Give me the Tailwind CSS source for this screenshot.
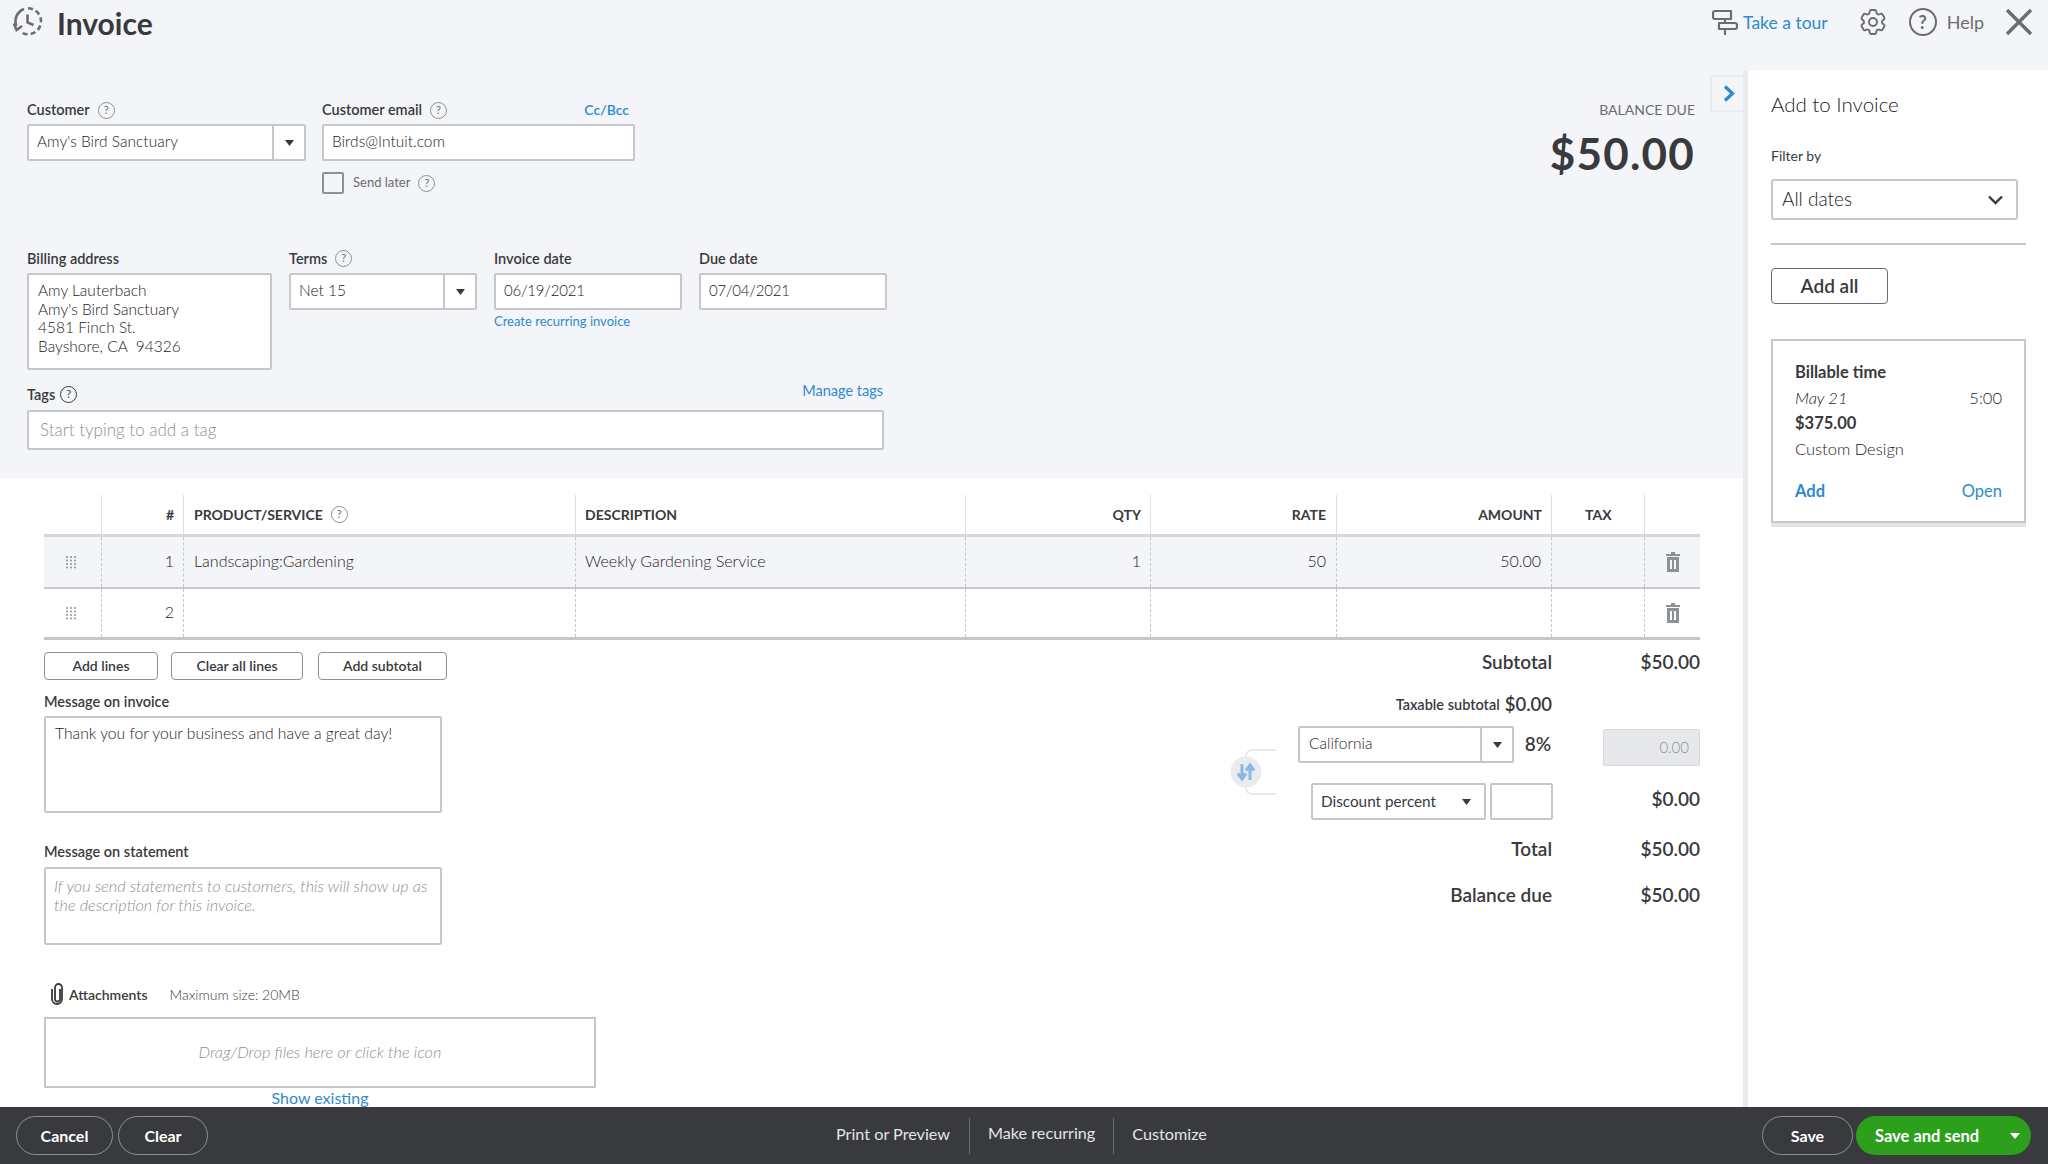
<!DOCTYPE html>
<html lang="en">
<head>
  <meta charset="UTF-8" />
  <title>Invoice</title>
  <script src="https://cdn.jsdelivr.net/npm/@tailwindcss/browser@4"></script>
</head>
<body class="w-[2048px] h-[1164px] overflow-hidden flex flex-col bg-white text-[#393a3d] font-['Lato','Open_Sans',sans-serif]">

  <!-- Header -->
  <header class="h-[70px] shrink-0 bg-[#f4f5f8] flex items-start">
    <svg class="w-[30px] h-[29px] ml-[13px] mt-[7px] text-[#6b6c72]" viewBox="0 0 30 29" fill="none" stroke="currentColor" stroke-width="2.6">
      <path d="M11 2A13 13 0 0 0 3.4 19" />
      <path d="M15 1.3A13 13 0 0 1 28 14.3A13 13 0 0 1 15 27.3A13 13 0 0 1 9.5 26" stroke-dasharray="5 3.2" />
      <path d="M0.8 16.5L3.6 23L9 19" />
      <path d="M14.5 7.5V15.5L20.5 18" />
    </svg>
    <h1 class="ml-[14px] mt-[4px] text-[30px] leading-[38px] font-bold">Invoice</h1>
    <div class="ml-auto flex items-start">
      <svg class="w-[26px] h-[28px] mt-[9px] text-[#6b6c72]" viewBox="0 0 26 28" fill="none" stroke="currentColor" stroke-width="2.2" stroke-linejoin="round">
        <path d="M3 2h16v8H3a2 2 0 0 1-2-2V4a2 2 0 0 1 2-2Z" />
        <path d="M7 14h16a2 2 0 0 1 2 2v2a2 2 0 0 1-2 2H7Z" />
        <path d="M13 10v4M13 20v6" />
      </svg>
      <a class="ml-[5px] mt-[10px] text-[17.5px] leading-[26px] text-[#2e8ace]">Take a tour</a>
      <svg class="w-[32px] h-[32px] ml-[29px] mt-[6px] text-[#6b6c72]" viewBox="0 0 24 24" fill="none" stroke="currentColor" stroke-width="1.4">
        <path d="M9.594 3.94c.09-.542.56-.94 1.11-.94h2.593c.55 0 1.02.398 1.11.94l.213 1.281c.063.374.313.686.645.87.074.04.147.083.22.127.325.196.72.257 1.075.124l1.217-.456a1.125 1.125 0 0 1 1.37.49l1.296 2.247a1.125 1.125 0 0 1-.26 1.431l-1.003.827c-.293.241-.438.613-.43.992a7.723 7.723 0 0 1 0 .255c-.008.378.137.75.43.991l1.004.827c.424.35.534.955.26 1.43l-1.298 2.247a1.125 1.125 0 0 1-1.369.491l-1.217-.456c-.355-.133-.75-.072-1.076.124a6.47 6.47 0 0 1-.22.128c-.331.183-.581.495-.644.869l-.213 1.281c-.09.543-.56.94-1.11.94h-2.594c-.55 0-1.019-.398-1.11-.94l-.213-1.281c-.062-.374-.312-.686-.644-.87a6.52 6.52 0 0 1-.22-.127c-.325-.196-.72-.257-1.076-.124l-1.217.456a1.125 1.125 0 0 1-1.369-.49l-1.297-2.247a1.125 1.125 0 0 1 .26-1.431l1.004-.827c.292-.24.437-.613.43-.991a6.932 6.932 0 0 1 0-.255c.007-.38-.138-.751-.43-.992l-1.004-.827a1.125 1.125 0 0 1-.26-1.43l1.297-2.247a1.125 1.125 0 0 1 1.37-.491l1.216.456c.356.133.751.072 1.076-.124.072-.044.146-.086.22-.128.332-.183.582-.495.644-.869l.214-1.28Z" />
        <circle cx="12" cy="12" r="3" />
      </svg>
      <span class="ml-[20px] mt-[8px] w-[28px] h-[28px] rounded-full border-[2px] border-[#6b6c72] flex items-center justify-center text-[18px] font-bold text-[#6b6c72]">?</span>
      <span class="ml-[10px] mt-[9px] text-[18px] leading-[26px] text-[#6b6c72]">Help</span>
      <svg class="w-[28px] h-[28px] ml-[21px] mr-[15px] mt-[8px] text-[#6b6c72]" viewBox="0 0 28 28" fill="none" stroke="currentColor" stroke-width="3.4">
        <path d="M2 2L26 26M26 2L2 26" />
      </svg>
    </div>
  </header>

  <div class="flex-1 flex min-h-0">

    <!-- Main column -->
    <main class="w-[1743px] shrink-0 flex flex-col overflow-hidden">

      <!-- Top form -->
      <section class="h-[408px] shrink-0 bg-[#f4f5f8] relative pl-[27px] pr-[48px] pt-[30px]">
        <div class="absolute right-[-2px] top-[5px] w-[35px] h-[37px] border-2 border-r-0 border-[#e9ebef] flex items-center justify-center">
          <svg class="w-[12px] h-[17px] text-[#2e8ace]" viewBox="0 0 12 17" fill="none" stroke="currentColor" stroke-width="3.2"><path d="M2 1.5L9.5 8.5L2 15.5" /></svg>
        </div>

        <div class="flex h-[149px]">
          <div class="w-[279px]">
            <div class="h-[24px] flex items-start gap-[8px]">
              <span class="text-[14.5px] leading-[20px] font-semibold">Customer</span>
              <span class="mt-[2px] w-[17px] h-[17px] rounded-full border-[1.5px] border-[#8d9096] flex items-center justify-center text-[11px] text-[#6b6c72]">?</span>
            </div>
            <div class="h-[37px] bg-white border-2 border-[#c4c7cc] rounded-[2px] flex items-center">
              <span class="flex-1 pl-[8px] pb-[1px] text-[15.5px] font-light text-[#1f2023]">Amy's Bird Sanctuary</span>
              <span class="w-[32px] h-full border-l-2 border-[#c4c7cc] flex items-center justify-center">
                <svg class="w-[9px] h-[6px]" viewBox="0 0 9 6" fill="#393a3d"><path d="M0 0H9L4.5 6Z" /></svg>
              </span>
            </div>
          </div>
          <div class="w-[313px] ml-[16px]">
            <div class="h-[24px] flex items-start gap-[8px]">
              <span class="text-[14.5px] leading-[20px] font-semibold">Customer email</span>
              <span class="mt-[2px] w-[17px] h-[17px] rounded-full border-[1.5px] border-[#8d9096] flex items-center justify-center text-[11px] text-[#6b6c72]">?</span>
              <a class="ml-auto mr-[6px] text-[14px] leading-[20px] font-semibold text-[#2e8ace]">Cc/Bcc</a>
            </div>
            <div class="h-[37px] bg-white border-2 border-[#c4c7cc] rounded-[2px] flex items-center pl-[8px] pb-[1px] text-[15.5px] font-light text-[#1f2023]">Birds@Intuit.com</div>
            <div class="mt-[11px] flex items-center">
              <span class="w-[22px] h-[22px] border-2 border-[#8d9096] rounded-[2px]"></span>
              <span class="ml-[9px] text-[13px] text-[#6b6c72]">Send later</span>
              <span class="ml-[8px] w-[17px] h-[17px] rounded-full border-[1.5px] border-[#8d9096] flex items-center justify-center text-[11px] text-[#6b6c72]">?</span>
            </div>
          </div>
          <div class="ml-auto text-right">
            <div class="text-[14px] leading-[20px] text-[#6b6c72]">BALANCE DUE</div>
            <div class="mt-[8px] text-[44px] leading-[50px] font-bold tracking-[1.2px]">$50.00</div>
          </div>
        </div>

        <div class="flex gap-[17px]">
          <div class="w-[245px]">
            <div class="h-[24px] text-[14.5px] leading-[20px] font-semibold">Billing address</div>
            <div class="h-[97px] bg-white border-2 border-[#c4c7cc] rounded-[2px] pl-[9px] pt-[6px] text-[15.5px] font-light text-[#1f2023] leading-[18.5px]">
              <div>Amy Lauterbach</div>
              <div>Amy's Bird Sanctuary</div>
              <div>4581 Finch St.</div>
              <div>Bayshore, CA&nbsp; 94326</div>
            </div>
          </div>
          <div class="w-[188px]">
            <div class="h-[24px] flex items-start gap-[8px]">
              <span class="text-[14.5px] leading-[20px] font-semibold">Terms</span>
              <span class="mt-[1px] w-[17px] h-[17px] rounded-full border-[1.5px] border-[#8d9096] flex items-center justify-center text-[11px] text-[#6b6c72]">?</span>
            </div>
            <div class="h-[37px] bg-white border-2 border-[#c4c7cc] rounded-[2px] flex items-center">
              <span class="flex-1 pl-[8px] pb-[2px] text-[15.5px] font-light text-[#1f2023]">Net 15</span>
              <span class="w-[32px] h-full border-l-2 border-[#c4c7cc] flex items-center justify-center">
                <svg class="w-[9px] h-[6px]" viewBox="0 0 9 6" fill="#393a3d"><path d="M0 0H9L4.5 6Z" /></svg>
              </span>
            </div>
          </div>
          <div class="w-[188px]">
            <div class="h-[24px] text-[14.5px] leading-[20px] font-semibold">Invoice date</div>
            <div class="h-[37px] bg-white border-2 border-[#c4c7cc] rounded-[2px] flex items-center pl-[8px] pb-[2px] text-[15px] font-light text-[#1f2023] tracking-[-0.2px]">06/19/2021</div>
            <a class="block mt-[1px] text-[13px] leading-[20px] text-[#2e8ace]">Create recurring invoice</a>
          </div>
          <div class="w-[188px]">
            <div class="h-[24px] text-[14.5px] leading-[20px] font-semibold">Due date</div>
            <div class="h-[37px] bg-white border-2 border-[#c4c7cc] rounded-[2px] flex items-center pl-[8px] pb-[2px] text-[15px] font-light text-[#1f2023] tracking-[-0.2px]">07/04/2021</div>
          </div>
        </div>

        <div class="w-[857px] mt-[11px]">
          <div class="h-[29px] flex items-start">
            <span class="mt-[4px] text-[14.5px] leading-[20px] font-semibold">Tags</span>
            <span class="ml-[5px] mt-[5px] w-[17px] h-[17px] rounded-full border-[1.5px] border-[#393a3d] flex items-center justify-center text-[11px]">?</span>
            <a class="ml-auto mr-[1px] text-[14.5px] leading-[20px] text-[#2e8ace]">Manage tags</a>
          </div>
          <div class="h-[40px] bg-white border-2 border-[#c4c7cc] rounded-[2px] flex items-center pl-[11px] pb-[1px] text-[17px] font-light text-[#8d9096]">Start typing to add a tag</div>
        </div>
      </section>

      <!-- Lines + totals -->
      <section class="flex-1 min-h-0 pl-[44px] pt-[17px] w-[1700px]">
        <div class="grid grid-cols-[58px_82px_392px_390px_185px_186px_215px_93px_55px] h-[39px] border-b-[3px] border-[#d4d7dc] box-content text-[14px] font-bold items-stretch">
          <div class="border-r border-[#dcdee2]"></div>
          <div class="border-r border-[#dcdee2] pr-[9px] pb-[1px] flex items-center justify-end">#</div>
          <div class="border-r border-[#dcdee2] pl-[10px] pb-[1px] flex items-center gap-[8px]">PRODUCT/SERVICE
            <span class="w-[17px] h-[17px] rounded-full border-[1.5px] border-[#8d9096] flex items-center justify-center text-[11px] font-normal text-[#6b6c72]">?</span>
          </div>
          <div class="border-r border-[#dcdee2] pl-[9px] pb-[1px] flex items-center">DESCRIPTION</div>
          <div class="border-r border-[#dcdee2] pr-[9px] pb-[1px] flex items-center justify-end">QTY</div>
          <div class="border-r border-[#dcdee2] pr-[10px] pb-[1px] flex items-center justify-end">RATE</div>
          <div class="border-r border-[#dcdee2] pr-[9px] pb-[1px] flex items-center justify-end">AMOUNT</div>
          <div class="border-r border-[#dcdee2] pl-[33px] pb-[1px] flex items-center">TAX</div>
          <div></div>
        </div>

        <div class="grid grid-cols-[58px_82px_392px_390px_185px_186px_215px_93px_55px] h-[50px] bg-[#f4f5f8] border-b-2 border-[#c4c7cc] box-content text-[16px] font-light text-[#1f2023] items-stretch">
          <div class="border-r border-dashed border-[#c4c7cc] pr-[4px] flex items-center justify-center">
            <svg class="w-[12px] h-[14px]" viewBox="0 0 12 14" fill="#8d9096"><circle cx="2" cy="2" r="1"/><circle cx="6" cy="2" r="1"/><circle cx="10" cy="2" r="1"/><circle cx="2" cy="5.5" r="1"/><circle cx="6" cy="5.5" r="1"/><circle cx="10" cy="5.5" r="1"/><circle cx="2" cy="9" r="1"/><circle cx="6" cy="9" r="1"/><circle cx="10" cy="9" r="1"/><circle cx="2" cy="12.5" r="1"/><circle cx="6" cy="12.5" r="1"/><circle cx="10" cy="12.5" r="1"/></svg>
          </div>
          <div class="border-r border-dashed border-[#c4c7cc] pr-[9px] pb-[3px] flex items-center justify-end">1</div>
          <div class="border-r border-dashed border-[#c4c7cc] pl-[10px] pb-[3px] flex items-center">Landscaping:Gardening</div>
          <div class="border-r border-dashed border-[#c4c7cc] pl-[9px] pb-[3px] flex items-center">Weekly Gardening Service</div>
          <div class="border-r border-dashed border-[#c4c7cc] pr-[9px] pb-[3px] flex items-center justify-end">1</div>
          <div class="border-r border-dashed border-[#c4c7cc] pr-[10px] pb-[3px] flex items-center justify-end">50</div>
          <div class="border-r border-dashed border-[#c4c7cc] pr-[10px] pb-[3px] flex items-center justify-end">50.00</div>
          <div class="border-r border-dashed border-[#c4c7cc]"></div>
          <div class="flex items-center justify-center">
            <svg class="w-[14px] h-[20px]" viewBox="0 0 14 20" fill="#8d9096"><path d="M5 0h4v2h5v2H0V2h5Z"/><path d="M1 5h12v15H1ZM4 8v9h2V8ZM8 8v9h2V8Z" fill-rule="evenodd"/></svg>
          </div>
        </div>

        <div class="grid grid-cols-[58px_82px_392px_390px_185px_186px_215px_93px_55px] h-[48px] border-b-[3px] border-[#c4c7cc] box-content text-[16px] font-light text-[#1f2023] items-stretch">
          <div class="border-r border-dashed border-[#c4c7cc] pr-[4px] flex items-center justify-center">
            <svg class="w-[12px] h-[14px]" viewBox="0 0 12 14" fill="#8d9096"><circle cx="2" cy="2" r="1"/><circle cx="6" cy="2" r="1"/><circle cx="10" cy="2" r="1"/><circle cx="2" cy="5.5" r="1"/><circle cx="6" cy="5.5" r="1"/><circle cx="10" cy="5.5" r="1"/><circle cx="2" cy="9" r="1"/><circle cx="6" cy="9" r="1"/><circle cx="10" cy="9" r="1"/><circle cx="2" cy="12.5" r="1"/><circle cx="6" cy="12.5" r="1"/><circle cx="10" cy="12.5" r="1"/></svg>
          </div>
          <div class="border-r border-dashed border-[#c4c7cc] pr-[9px] pb-[3px] flex items-center justify-end">2</div>
          <div class="border-r border-dashed border-[#c4c7cc]"></div>
          <div class="border-r border-dashed border-[#c4c7cc]"></div>
          <div class="border-r border-dashed border-[#c4c7cc]"></div>
          <div class="border-r border-dashed border-[#c4c7cc]"></div>
          <div class="border-r border-dashed border-[#c4c7cc]"></div>
          <div class="border-r border-dashed border-[#c4c7cc]"></div>
          <div class="flex items-center justify-center">
            <svg class="w-[14px] h-[20px]" viewBox="0 0 14 20" fill="#8d9096"><path d="M5 0h4v2h5v2H0V2h5Z"/><path d="M1 5h12v15H1ZM4 8v9h2V8ZM8 8v9h2V8Z" fill-rule="evenodd"/></svg>
          </div>
        </div>

        <div class="flex justify-between">
          <!-- Left: messages and attachments -->
          <div class="w-[552px]">
            <div class="mt-[12px] flex text-[14px] font-semibold">
              <button class="w-[114px] h-[28px] pb-[2px] border-[1.5px] border-[#8d9096] rounded-[4px]">Add lines</button>
              <button class="ml-[13px] w-[132px] h-[28px] pb-[2px] border-[1.5px] border-[#8d9096] rounded-[4px]">Clear all lines</button>
              <button class="ml-[15px] w-[129px] h-[28px] pb-[2px] border-[1.5px] border-[#8d9096] rounded-[4px]">Add subtotal</button>
            </div>
            <div class="mt-[12px] h-[24px] text-[14.5px] leading-[20px] font-semibold">Message on invoice</div>
            <div class="w-[398px] h-[97px] border-2 border-[#c4c7cc] rounded-[2px] pl-[9px] pt-[5px] text-[15.7px] font-light text-[#1f2023] leading-[20px]">Thank you for your business and have a great day!</div>
            <div class="mt-[27px] h-[27px] text-[14.5px] leading-[24px] font-semibold">Message on statement</div>
            <div class="w-[398px] h-[78px] border-2 border-[#c4c7cc] rounded-[2px] pl-[8px] pt-[7px] pr-[6px] text-[16.3px] leading-[19px] font-light italic text-[#8d9096]">If you send statements to customers, this will show up as the description for this invoice.</div>
            <div class="mt-[36px] h-[26px] flex items-center">
              <svg class="ml-[6px] w-[15px] h-[22px] text-[#393a3d]" viewBox="0 0 15 22" fill="none" stroke="currentColor" stroke-width="1.8">
                <path d="M10 6v10a2.5 2.5 0 0 1-5 0V4.5a3.5 3.5 0 0 1 7 0V16a5 5 0 0 1-10 0V6" />
              </svg>
              <span class="ml-[4px] text-[14px] font-semibold">Attachments</span>
              <span class="ml-[22px] text-[14px] font-light text-[#393a3d]">Maximum size: 20MB</span>
            </div>
            <div class="mt-[10px] h-[71px] border-2 border-[#c4c7cc] flex items-center justify-center text-[16.4px] font-light italic text-[#8d9096]">Drag/Drop files here or click the icon</div>
            <a class="block text-center text-[16px] leading-[20px] text-[#2e8ace]">Show existing</a>
          </div>

          <!-- Right: totals -->
          <div class="w-[470px] relative">
            <div class="h-[44px] flex items-center justify-end font-semibold text-[19px]">
              <span>Subtotal</span><span class="w-[148px] text-right">$50.00</span>
            </div>
            <div class="h-[42px] pr-[148px] flex items-center justify-end gap-[5px] font-semibold">
              <span class="text-[14.5px]">Taxable subtotal</span><span class="text-[18.5px]">$0.00</span>
            </div>
            <div class="h-[40px] flex items-start">
              <div class="ml-[68px] w-[217px] h-[37px] border-2 border-[#c4c7cc] rounded-[2px] flex items-center">
                <span class="flex-1 pl-[9px] pb-[1px] text-[15.5px] font-light text-[#1f2023]">California</span>
                <span class="w-[32px] h-full border-l-2 border-[#c4c7cc] flex items-center justify-center">
                  <svg class="w-[9px] h-[6px]" viewBox="0 0 9 6" fill="#393a3d"><path d="M0 0H9L4.5 6Z" /></svg>
                </span>
              </div>
              <span class="w-[37px] text-right text-[19px] leading-[35px] font-semibold">8%</span>
              <div class="ml-[52px] mt-[3px] w-[97px] h-[37px] bg-[#e6e8eb] border border-[#d4d7dc] rounded-[2px] flex items-center justify-end pr-[10px] text-[15px] font-light text-[#8d9096]">0.00</div>
            </div>
            <div class="mt-[17px] h-[37px] flex items-start">
              <div class="ml-[81px] w-[175px] h-[37px] border-2 border-[#c4c7cc] rounded-[2px] flex items-center justify-between pl-[8px] pr-[13px] text-[15.3px]">
                Discount percent
                <svg class="w-[9px] h-[6px]" viewBox="0 0 9 6" fill="#393a3d"><path d="M0 0H9L4.5 6Z" /></svg>
              </div>
              <div class="ml-[4px] w-[63px] h-[37px] border-2 border-[#c4c7cc] rounded-[2px]"></div>
              <span class="flex-1 text-right text-[19px] leading-[32px] font-semibold">$0.00</span>
            </div>
            <div class="h-[58px] flex items-center justify-end font-semibold text-[19px]">
              <span>Total</span><span class="w-[148px] text-right">$50.00</span>
            </div>
            <div class="h-[34px] flex items-center justify-end font-semibold text-[19px]">
              <span>Balance due</span><span class="w-[148px] text-right">$50.00</span>
            </div>

            <!-- Swap bracket sits over the tax/discount rows -->
            <svg class="absolute left-0 top-[109px] w-[46px] h-[46px]" viewBox="0 0 46 46" fill="none">
              <path d="M46 1H22a6 6 0 0 0-6 6v32a6 6 0 0 0 6 6h24" stroke="#e0e2e6" stroke-width="1.5" />
              <circle cx="16" cy="23" r="15.5" fill="#e9ebef" />
              <path d="M12 15v14M8 24.5l4 5.5l4-5.5" stroke="#8ab8e4" stroke-width="3" />
              <path d="M20 31V17M16 21.5l4-5.5l4 5.5" stroke="#8ab8e4" stroke-width="3" />
            </svg>
          </div>
        </div>
      </section>
    </main>

    <div class="w-[5px] shrink-0 bg-[#e9ebef]"></div>

    <!-- Add to Invoice panel -->
    <aside class="flex-1 pl-[23px] pr-[22px] pt-[22px]">
      <h2 class="text-[20.5px] leading-[24px] font-light text-[#1f2023]">Add to Invoice</h2>
      <div class="mt-[31px] text-[14px] leading-[18px]">Filter by</div>
      <div class="mt-[14px] w-[247px] h-[41px] border-2 border-[#c4c7cc] rounded-[3px] flex items-center justify-between pl-[9px] pr-[13px] text-[19px] font-light text-[#1f2023]">
        All dates
        <svg class="w-[15px] h-[10px] text-[#393a3d]" viewBox="0 0 15 10" fill="none" stroke="currentColor" stroke-width="2.4"><path d="M1 1.5L7.5 8L14 1.5" /></svg>
      </div>
      <div class="mt-[23px] h-[2px] bg-[#c4c7cc]"></div>
      <button class="mt-[23px] w-[117px] h-[36px] border-[1.5px] border-[#6b6c72] rounded-[4px] text-[19px] font-semibold">Add all</button>
      <div class="mt-[35px] w-[255px] h-[184px] border-2 border-[#c4c7cc] shadow-[0_4px_0_#e3e5e8] pl-[22px] pr-[22px] pt-[19px] text-[16.5px] leading-[25.7px]">
        <div class="font-bold">Billable time</div>
        <div class="flex justify-between font-light text-[#1f2023]"><span class="italic">May 21</span><span>5:00</span></div>
        <div class="font-bold">$375.00</div>
        <div class="font-light text-[#1f2023]">Custom Design</div>
        <div class="mt-[16px] flex justify-between text-[#2e8ace]"><a class="font-bold">Add</a><a>Open</a></div>
      </div>
    </aside>
  </div>

  <!-- Footer -->
  <footer class="h-[57px] shrink-0 bg-[#393a3d] text-white flex items-center pl-[16px] pr-[17px] relative">
    <button class="w-[97px] h-[39px] rounded-full border border-[#8d9096] text-[16px] font-bold">Cancel</button>
    <button class="ml-[5px] w-[90px] h-[39px] rounded-full border border-[#8d9096] text-[16px] font-bold">Clear</button>
    <div class="ml-[628px] flex items-center text-[16.2px] text-[#e3e5e8]">
      <span class="pr-[19px] pb-[3px]">Print or Preview</span>
      <span class="px-[18px] h-[36px] leading-[30px] border-x border-[#6b6c72]">Make recurring</span>
      <span class="pl-[18px] pb-[3px]">Customize</span>
    </div>
    <button class="ml-auto w-[91px] h-[39px] rounded-full border border-[#8d9096] text-[16px] font-bold">Save</button>
    <button class="ml-[3px] w-[175px] h-[39px] rounded-full bg-[#2ca01c] flex items-center pl-[19px] pr-[11px] pt-[1px] justify-between text-[16.5px] font-bold">
      Save and send
      <svg class="w-[10px] h-[6px]" viewBox="0 0 10 6" fill="#fff"><path d="M0 0H10L5 6Z" /></svg>
    </button>
  </footer>
</body>
</html>
